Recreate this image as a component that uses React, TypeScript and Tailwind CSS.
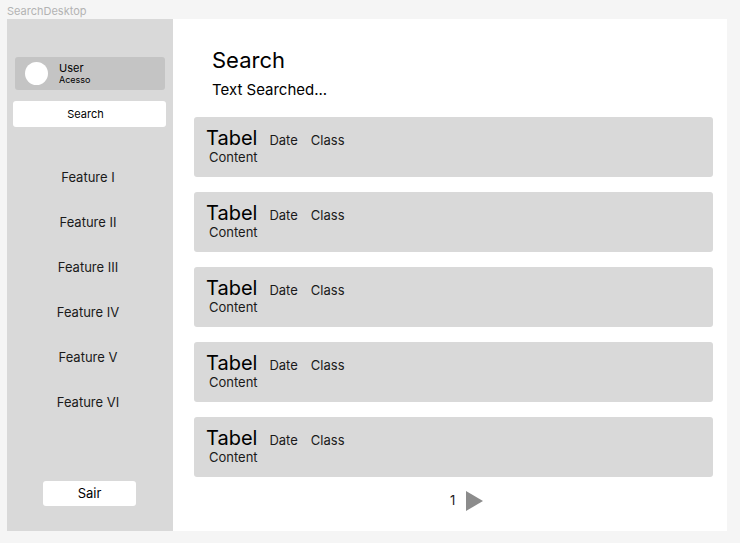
import React from "react";

const features = ["Feature I", "Feature II", "Feature III", "Feature IV", "Feature V", "Feature VI"];
const rows = [1, 2, 3, 4, 5];

const ResultCard = () => (
    <div className="h-[60px] bg-[#d9d9d9] rounded-[3px] pt-[9px] pl-3 flex flex-col">
        <div className="flex items-baseline">
            <span className="text-[20px] leading-6 text-black">Tabel</span>
            <span className="text-[13px] ml-3 text-[#1a1a1a]">Date</span>
            <span className="text-[13px] ml-[13px] text-[#1a1a1a]">Class</span>
        </div>
        <span className="-mt-[2px] text-[13px] leading-4 pl-[3px] text-[#1a1a1a]">Content</span>
    </div>
);

export default function App() {
    return (
        <div className="w-[740px] h-[543px] bg-[#f5f5f5] flex flex-col" style={{fontFamily: "Inter, 'Noto Sans', sans-serif"}}>
            <div className="h-[19px] pl-[7px] text-[11px] leading-[22px] text-[#b3b3b3]">SearchDesktop</div>
            <div className="ml-[7px] w-[720px] h-[512px] flex bg-white">
                {/* sidebar */}
                <aside className="w-[166px] bg-[#d9d9d9] flex flex-col pt-[38px] pb-[25px]">
                    <div className="mx-2 h-[33px] bg-[#c4c4c4] rounded-[3px] flex items-center pl-[10px]">
                        <div className="w-[23px] h-[23px] rounded-full bg-white"></div>
                        <div className="ml-[11px] flex flex-col">
                            <span className="text-[11px] leading-[12px] text-black">User</span>
                            <span className="text-[9px] leading-[11px] text-black">Acesso</span>
                        </div>
                    </div>
                    <div className="mt-[11px] ml-[6px] w-[153px] h-[26px] bg-white rounded-[3px] flex items-center justify-center pr-2 text-[11px] text-black">
                        Search
                    </div>
                    <nav className="mt-[28px] flex flex-col pr-1">
                        {features.map((f) => (
                            <div key={f} className="h-[45px] flex items-center justify-center text-[13px] text-[#1a1a1a]">
                                {f}
                            </div>
                        ))}
                    </nav>
                    <div className="mt-auto ml-9 w-[93px] h-[25px] bg-white rounded-[3px] flex items-center justify-center text-[13px] text-black">
                        Sair
                    </div>
                </aside>

                {/* main */}
                <main className="flex-1 flex flex-col pl-[21px] pr-[14px] pt-[28px]">
                    <h1 className="pl-[18px] text-[22px] leading-[27px] text-black">Search</h1>
                    <p className="pl-[18px] mt-[7px] text-[15px] leading-[18px] text-black">Text Searched...</p>
                    <div className="mt-[18px] flex flex-col gap-[15px]">
                        {rows.map((r) => (
                            <ResultCard key={r} />
                        ))}
                    </div>
                    <div className="mt-[14px] h-5 flex items-center pl-[256px]">
                        <span className="text-[13px] text-[#1a1a1a]">1</span>
                        <svg width="17" height="20" viewBox="0 0 17 20" className="ml-[11px]">
                            <polygon points="0,0 17,10 0,20" fill="#8c8c8c" />
                        </svg>
                    </div>
                </main>
            </div>
        </div>
    );
}
